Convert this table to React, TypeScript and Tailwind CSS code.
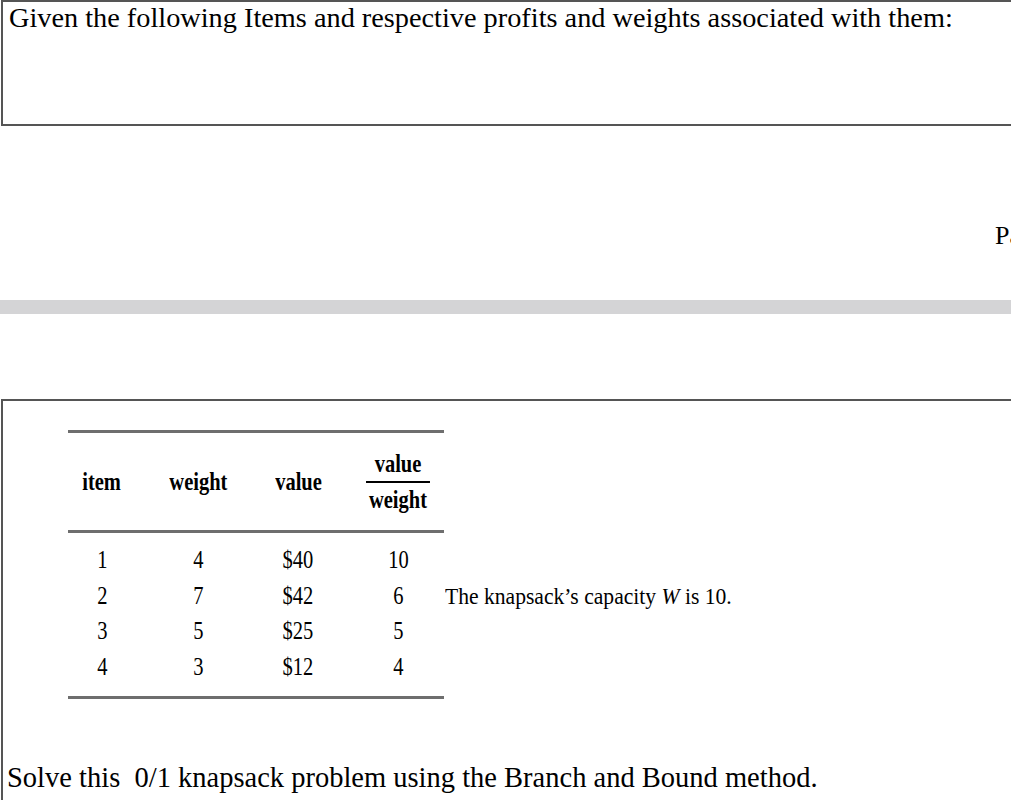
import React from "react";

const serif = { fontFamily: '"Liberation Serif", "Times New Roman", serif' };

function Cells({ r }: { r: React.ReactNode[] }) {
  return (
    <>
      <div className="w-[68px] text-center">
        <span className="inline-block scale-x-[0.82]">{r[0]}</span>
      </div>
      <div className="w-[124px] text-center">
        <span className="inline-block scale-x-[0.82]">{r[1]}</span>
      </div>
      <div className="w-[76px] text-center">
        <span className="inline-block scale-x-[0.82]">{r[2]}</span>
      </div>
      <div className="w-[16px]" />
      <div className="w-[92px] flex justify-center">
        <div className="scale-x-[0.82]">{r[3]}</div>
      </div>
    </>
  );
}

export default function App() {
  const rows = [
    ["1", "4", "$40", "10"],
    ["2", "7", "$42", "6"],
    ["3", "5", "$25", "5"],
    ["4", "3", "$12", "4"],
  ];
  const fraction = (
    <div className="flex flex-col items-center">
      <span className="leading-[26px]">value</span>
      <span className="w-[78px] h-[2px] bg-black my-[4px]" />
      <span className="leading-[26px]">weight</span>
    </div>
  );
  return (
    <div
      className="w-[1011px] h-[800px] overflow-hidden bg-white text-black font-['Liberation_Serif','Times_New_Roman',serif]"
      style={serif}
    >
      {/* Box 1 */}
      <div className="ml-[1px] w-[1100px] h-[126px] border-t-2 border-l-2 border-b-2 border-[#555] pl-[6px]">
        <p className="text-[28.3px] leading-[32px] whitespace-nowrap">
          Given the following Items and respective profits and weights associated with them:
        </p>
      </div>

      {/* Spacer with cut-off text */}
      <div className="h-[174px] pt-[95px]">
        <div className="ml-[995px] text-[26px] leading-[30px] whitespace-nowrap">Pa</div>
      </div>

      {/* Gray bar */}
      <div className="h-[14px] bg-[#d4d4d6]" />

      <div className="h-[85px]" />

      {/* Box 2 */}
      <div className="ml-[1px] w-[1100px] h-[420px] border-t-2 border-l-2 border-[#555]">
        <div className="ml-[65px] mt-[29px]">
          <div className="w-[376px] h-[3px] bg-[#6e6e6e]" />
          <div className="flex h-[97px] items-center font-bold text-[25px]">
            <Cells r={["item", "weight", "value", fraction]} />
          </div>
          <div className="w-[376px] h-[3px] bg-[#6e6e6e]" />
          <div className="pt-[9px] pb-[11px] text-[25px]">
            {rows.map((r) => (
              <div key={r[0]} className="flex h-[35.7px] items-center">
                <Cells r={r} />
                {r[0] === "2" && (
                  <div className="ml-[1px] text-[24px] whitespace-nowrap">
                    <span className="inline-block origin-left scale-x-[0.9]">
                      The knapsack’s capacity <i>W</i> is 10.
                    </span>
                  </div>
                )}
              </div>
            ))}
          </div>
          <div className="w-[376px] h-[3px] bg-[#6e6e6e]" />
        </div>
        <p className="mt-[62px] ml-[4px] text-[28.5px] leading-[34px] whitespace-nowrap">
          Solve this&nbsp; 0/1 knapsack problem using the Branch and Bound method.
        </p>
      </div>
    </div>
  );
}
